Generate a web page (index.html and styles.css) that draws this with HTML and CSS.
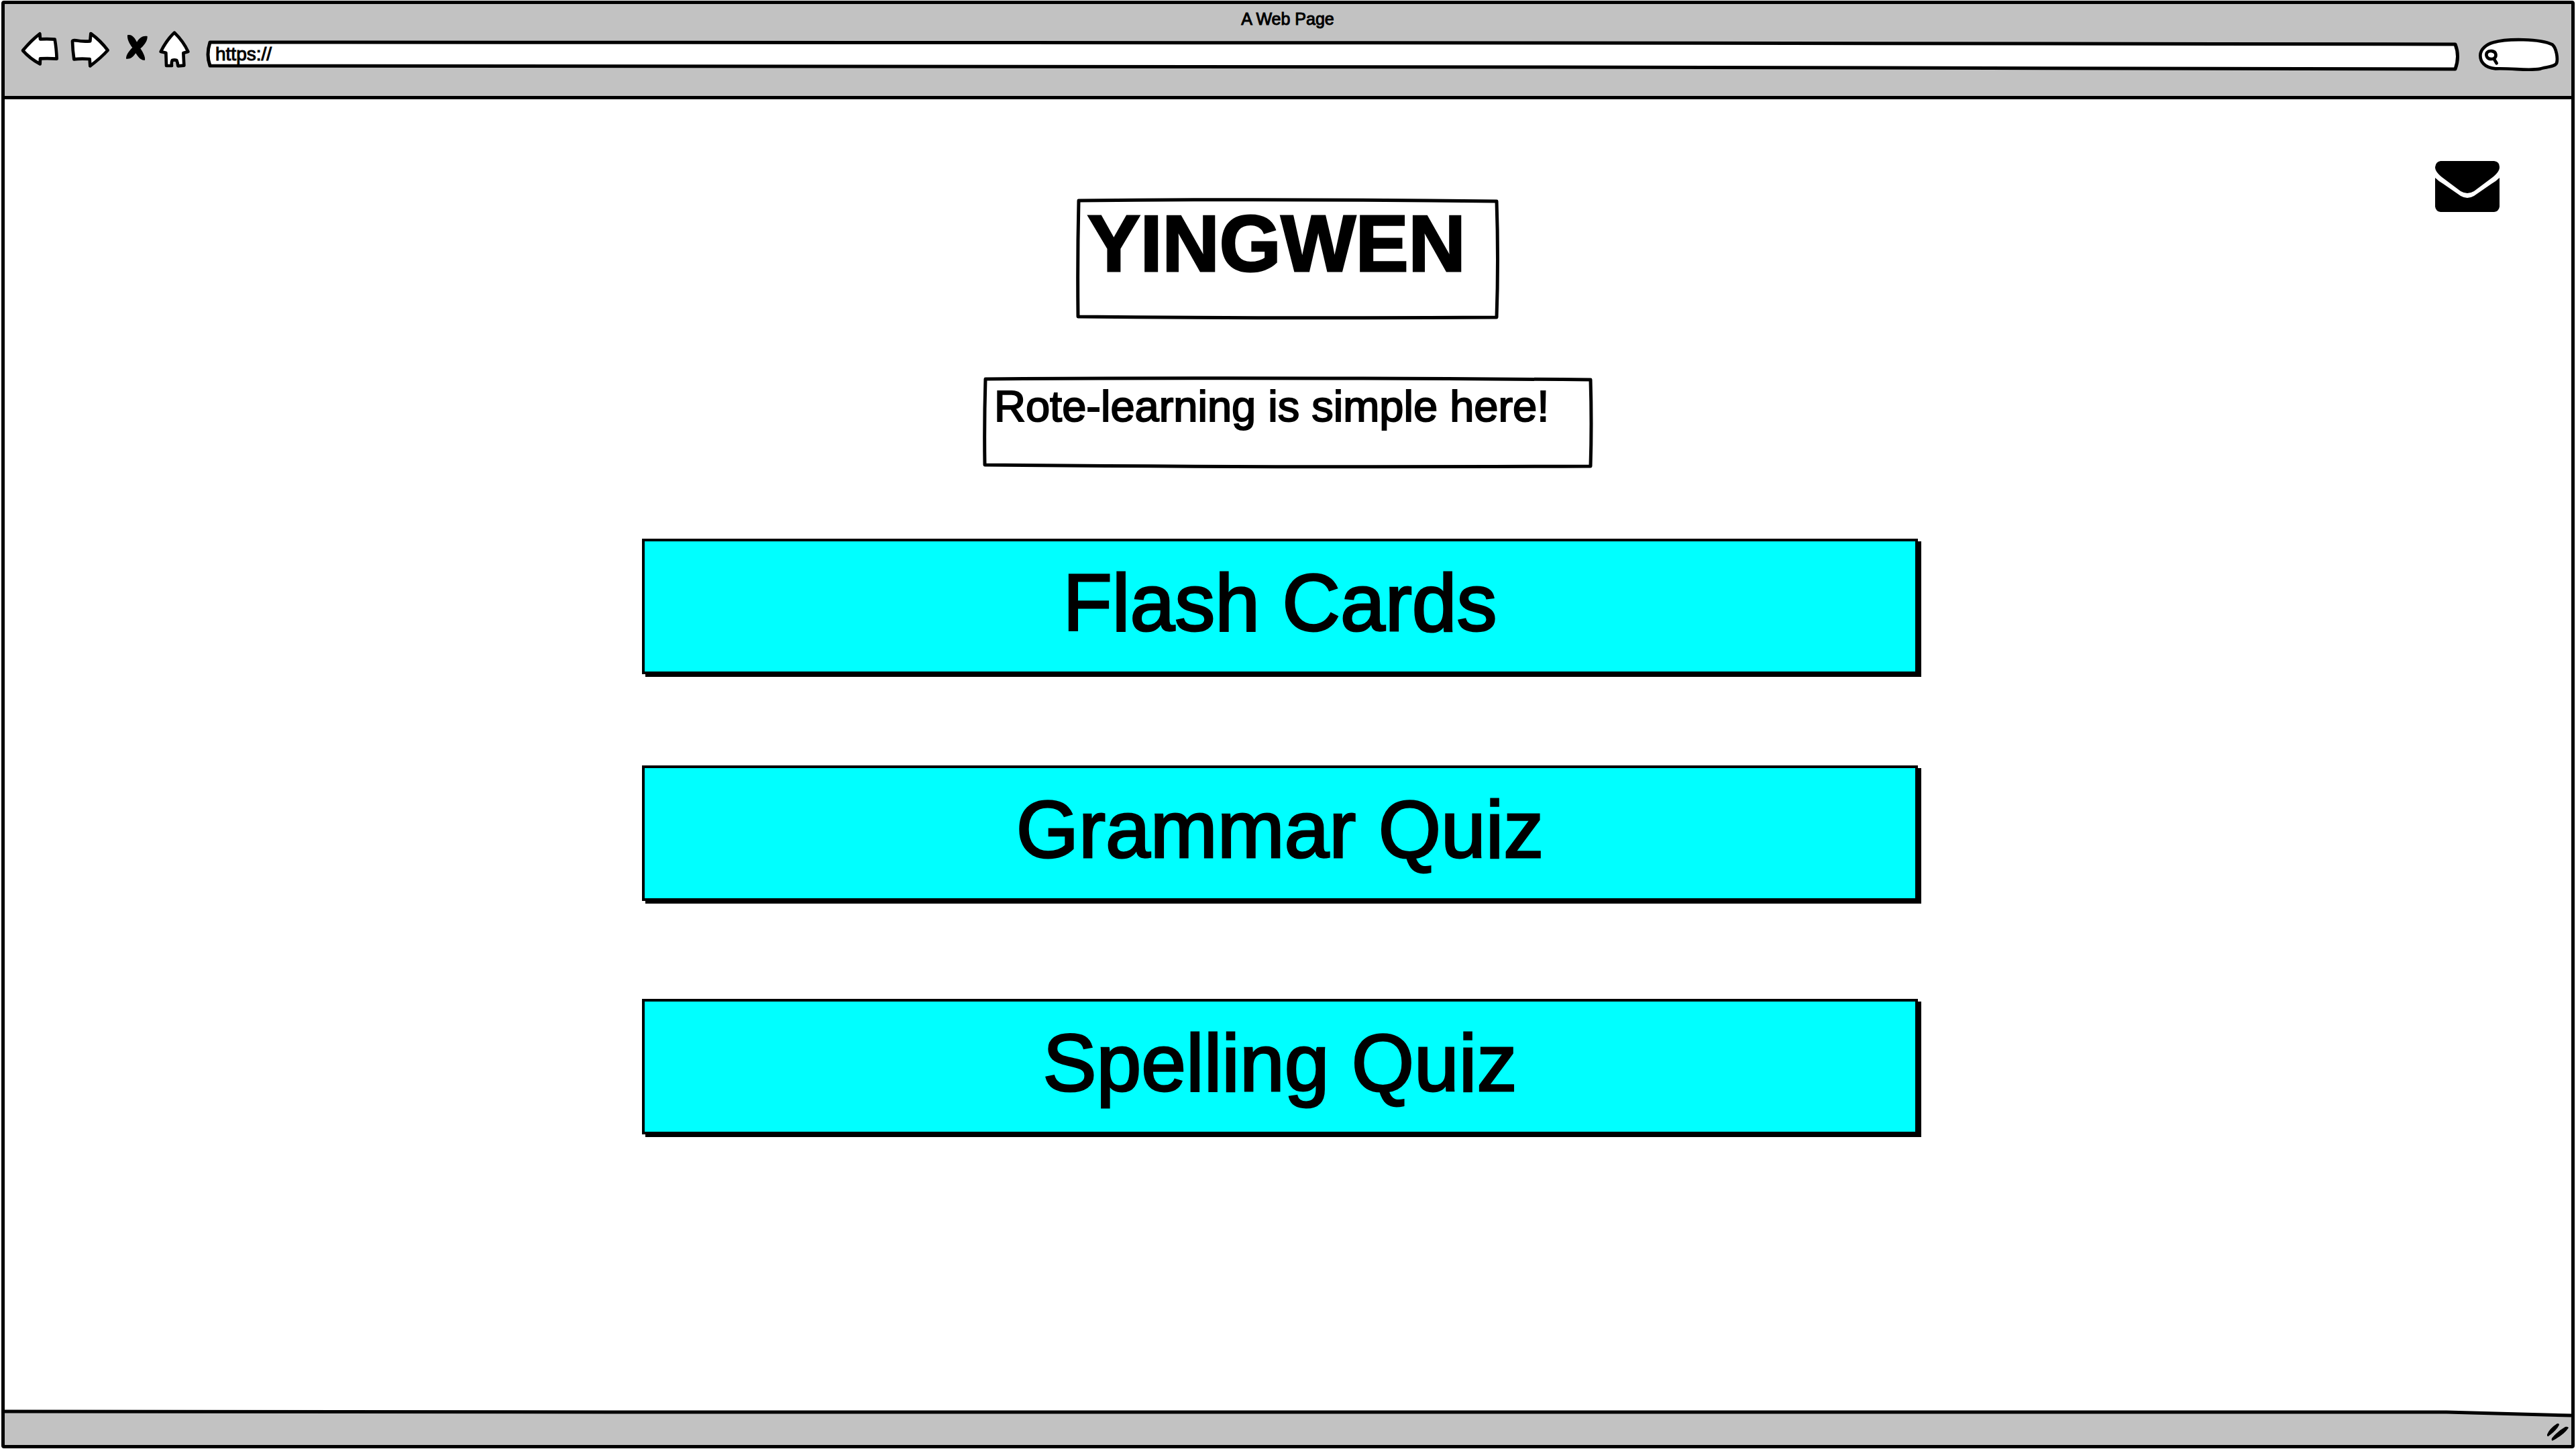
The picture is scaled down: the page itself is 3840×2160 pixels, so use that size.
FILE: index.html
```html
<!DOCTYPE html>
<html lang="en">
<head>
<meta charset="utf-8">
<title>A Web Page</title>
<link rel="stylesheet" href="styles.css">
</head>
<body>
<div class="window">
  <header class="toolbar">
    <p class="window-title">A Web Page</p>
    <div class="controls">
      <button class="tool" type="button" aria-label="Back">
        <svg class="icon" width="74" height="64" viewBox="69 132 222 192"><path class="ink paper" d="M102 226Q140 180 178 151L180 175Q220 173 245 176Q252 215 254 263Q220 260 180 262L179 286Q135 263 102 226Z"/></svg>
      </button>
      <button class="tool" type="button" aria-label="Forward">
        <svg class="icon" width="74" height="64" viewBox="291 132 222 192"><path class="ink paper" d="M324 184Q326 179 340 181Q370 187 403 184L406 150Q450 182 482 225Q450 260 403 295L401 264Q360 261 331 265Q325 225 324 184Z"/></svg>
      </button>
      <button class="tool" type="button" aria-label="Stop">
        <svg class="icon" width="58" height="64" viewBox="513 132 174 192"><path d="M570 157C590 150 605 172 612 188C625 165 642 158 659 162C661 185 640 207 628 217C640 235 651 255 648 269C630 273 615 250 607 238C595 255 582 266 564 263C563 245 580 225 592 213C578 195 568 175 570 157Z"/></svg>
      </button>
      <button class="tool" type="button" aria-label="Home">
        <svg class="icon" width="62" height="64" viewBox="687 132 186 192"><path class="ink paper" d="M780 146Q820 185 841 231L820 237L823 293L796 295Q794 278 790 270Q780 266 770 270Q766 280 768 294L744 294L742 236L719 231Q744 180 780 146Z"/></svg>
      </button>
      <label class="address">
        <svg class="sketch" viewBox="0 0 3360 64" preserveAspectRatio="none" aria-hidden="true"><path class="line paper" d="M6 19L2000 20L3353 22Q3360 40 3353 59L2000 56L6 54Q0 38 6 19Z"/></svg>
        <input class="address-input" type="text" value="https://" aria-label="Address">
      </label>
      <label class="search">
        <svg class="sketch" viewBox="402 132 366 192" aria-hidden="true"><path class="ink paper" d="M470 190C530 172 680 172 735 200C752 215 760 262 753 283C745 300 700 300 680 308C620 318 560 304 480 307C430 303 412 275 412 248C412 220 440 198 470 190Z"/><path class="ink" d="M441 236C452 223 478 227 481 242C484 256 474 264 461 264C444 264 435 250 441 236ZM472 262L485 283"/></svg>
        <input class="search-input" type="search" aria-label="Search">
      </label>
    </div>
  </header>

  <main class="page">
    <a class="mail" href="#contact" aria-label="Contact by mail">
      <svg class="icon" width="96" height="76" viewBox="0 0 96 76"><path d="M8 0H88Q96 1 96 9C96 15 91 20 86 24L58 45Q48 51 38 45L10 24C5 20 0 15 0 9Q1 1 8 0Z"/><path d="M0 25Q5 30 12 34L38 52Q48 58 58 52L84 34Q91 30 96 25V68Q95 75 88 76H8Q1 75 0 68Z"/></svg>
    </a>
    <div class="content">
      <h1 class="box title">
        <svg class="sketch" viewBox="0 0 630 180" preserveAspectRatio="none" aria-hidden="true"><path class="line" d="M3 3Q300 0 626 4Q629 90 626 177Q300 179 2 176Q1 90 3 3Z"/></svg>
        YINGWEN
      </h1>
      <p class="box tagline">
        <svg class="sketch" viewBox="0 0 908 136" preserveAspectRatio="none" aria-hidden="true"><path class="line" d="M3 3Q400 0 905 4Q907 70 905 133Q400 135 2 131Q1 70 3 3Z"/></svg>
        Rote-learning is simple here!
      </p>
      <nav class="menu" aria-label="Activities">
        <button class="choice" type="button">Flash Cards</button>
        <button class="choice" type="button">Grammar Quiz</button>
        <button class="choice choice-last" type="button">Spelling Quiz</button>
      </nav>
    </div>
  </main>

  <footer class="status">
    <svg class="sketch" viewBox="0 0 3826 52" preserveAspectRatio="none" aria-hidden="true"><path class="shade" d="M0 3H3640L3826 8V52H0Z"/><path class="line" d="M0 2Q200 4 900 3H3640L3826 8"/></svg>
    <svg class="grip" width="36" height="30" viewBox="465 180 108 90" aria-hidden="true"><path d="M515 187Q525 184 525 192Q512 218 475 244Q470 244 471 235Q482 208 515 187ZM552 201Q563 198 567 205Q545 238 494 263Q489 262 492 252Q518 220 552 201Z"/></svg>
  </footer>
</div>
</body>
</html>
```
FILE: styles.css
```css
* {
  box-sizing: border-box;
}

body {
  margin: 0;
  background: #fff;
  color: #000;
  font-family: "Liberation Sans", Arial, sans-serif;
}

button,
input {
  margin: 0;
  padding: 0;
  border: 0;
  background: none;
  color: inherit;
  font: inherit;
}

.window {
  display: flex;
  flex-direction: column;
  min-height: calc(100vh - 2px);
  margin: 1px 2px;
  border: 5px solid #000;
  border-radius: 4px;
}

/* Hand-drawn outlines */
.sketch {
  position: absolute;
  inset: 0;
  width: 100%;
  height: 100%;
  overflow: visible;
  pointer-events: none;
}

.line {
  fill: none;
  stroke: #000;
  stroke-width: 5px;
  stroke-linejoin: round;
  vector-effect: non-scaling-stroke;
}

.ink {
  fill: none;
  stroke: #000;
  stroke-width: 14px;
  stroke-linecap: round;
  stroke-linejoin: round;
}

.paper {
  fill: #fff;
}

.shade {
  fill: #c2c2c2;
}

.icon {
  display: block;
}

/* Browser bar */
.toolbar {
  height: 142px;
  padding: 6px 17px 0 16px;
  border-bottom: 5px solid #000;
  background: #c2c2c2;
}

.window-title {
  margin: 0;
  font-size: 25px;
  line-height: 32px;
  text-align: center;
  -webkit-text-stroke: 1px #000;
}

.controls {
  display: flex;
  height: 64px;
}

.tool {
  flex: none;
}

.address {
  position: relative;
  flex: 1;
  margin-left: 16px;
  padding: 17px 14px 8px;
}

.address-input {
  position: relative;
  display: block;
  width: 100%;
  height: 40px;
  font-size: 28px;
  -webkit-text-stroke: 1px #000;
}

.search {
  position: relative;
  width: 122px;
  margin-left: 27px;
  padding: 17px 12px 8px 34px;
}

.search-input {
  position: relative;
  display: block;
  width: 100%;
  height: 40px;
  font-size: 25px;
}

/* Page */
.page {
  display: grid;
  flex: 1;
  grid-template-columns: 100%;
}

.mail {
  z-index: 1;
  grid-area: 1 / 1;
  place-self: start end;
  margin: 92px 107px 0 0;
  color: inherit;
}

.content {
  display: flex;
  flex-direction: column;
  grid-area: 1 / 1;
  align-items: center;
  padding: 148px 24px;
}

.box {
  position: relative;
  max-width: 100%;
  margin: 0;
  padding: 0 16px;
}

.title {
  width: 630px;
  min-height: 180px;
  font-size: 118px;
  line-height: 134px;
  -webkit-text-stroke: 3px #000;
}

.tagline {
  width: 908px;
  min-height: 136px;
  margin-top: 86px;
  font-size: 65px;
  line-height: 88px;
  -webkit-text-stroke: 2px #000;
}

.menu {
  display: flex;
  flex-direction: column;
  width: 100%;
  max-width: 1926px;
  margin-top: 105px;
  padding-right: 24px;
  gap: 136px;
}

.choice {
  min-height: 202px;
  padding-bottom: 12px;
  border: 4px solid #000;
  background: #0ff;
  box-shadow: 5px 4px 0 #000;
  font-size: 120px;
  line-height: 136px;
  -webkit-text-stroke: 3px #000;
}

.choice-last {
  margin-top: 10px;
}

/* Bottom bar */
.status {
  position: relative;
  display: flex;
  align-items: flex-end;
  justify-content: flex-end;
  height: 52px;
  padding: 0 2px 4px;
}

.grip {
  position: relative;
}
```
